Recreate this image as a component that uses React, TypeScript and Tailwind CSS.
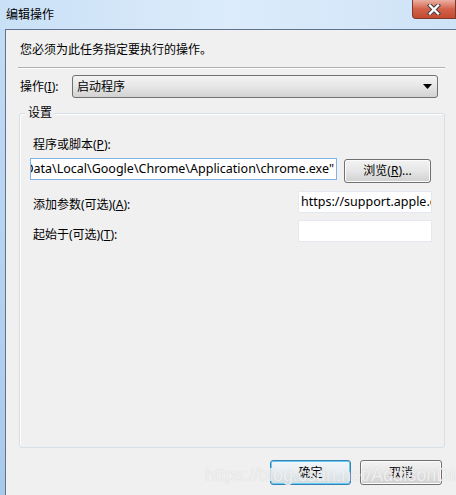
export default function App() {
  return (
    <div
      className="relative w-[456px] h-[495px] overflow-hidden bg-gradient-to-b from-[#d6e8f9] to-[#b3d0ef] text-[12px] text-black"
      style={{ fontFamily: '"Noto Sans", "Noto Sans CJK SC", sans-serif' }}
    >
      {/* TITLE BAR */}
      <div className="h-[29px] flex items-center pl-[6px] bg-gradient-to-r from-[#c9e0f6] via-[#dcecfb] to-[#cfe3f7]">
        <span className="text-[12px] leading-none">编辑操作</span>
      </div>

      {/* CLOSE */}
      <div className="absolute top-0 right-0 w-[44px] h-[19px] rounded-bl-[4px] border border-t-0 border-[#7a3b2e] bg-gradient-to-b from-[#eab0a2] via-[#d2614a] to-[#c44a30] flex items-center justify-center">
        <svg width="14" height="11" viewBox="0 0 14 11">
          <path d="M3 1.5 L11 9.5 M11 1.5 L3 9.5" stroke="#3b3b3b" strokeWidth="4.2" strokeLinecap="square" />
          <path d="M3 1.5 L11 9.5 M11 1.5 L3 9.5" stroke="#ffffff" strokeWidth="2.4" strokeLinecap="square" />
        </svg>
      </div>

      <div className="flex h-[466px]">
        {/* left frame */}
        <div className="w-[5px] bg-gradient-to-b from-[#c3dbf4] to-[#a9c9ec]" />

        {/* CLIENT */}
        <div className="flex-1 flex flex-col bg-[#f0f0f0] border-l border-t border-[#5f7390]">
          <p className="mt-[12px] pl-[14px] leading-[16px]">您必须为此任务指定要执行的操作。</p>

          <div className="mt-[9px] ml-[12px] mr-[11px] border-t border-b border-t-[#b0b0b0] border-b-white" />

          <div className="mt-[6px] flex items-center pl-[14px]">
            <span className="w-[52px] leading-[16px]">
              操作(<u>I</u>):
            </span>
            <div className="w-[366px] h-[23px] rounded-[3px] border border-[#707070] bg-gradient-to-b from-[#f3f3f3] via-[#e6e6e6] to-[#d2d2d2] flex items-center pl-[4px] pr-[5px]">
              <span className="flex-1">启动程序</span>
              <svg width="9" height="5" viewBox="0 0 9 5">
                <path d="M0 0 H9 L4.5 5 Z" fill="#000" />
              </svg>
            </div>
          </div>

          {/* GROUP */}
          <div className="relative mt-[15px] ml-[13px] mr-[11px] h-[335px] rounded-[3px] border border-[#d5dfe5] shadow-[inset_1px_1px_0_#ffffff]">
            <span className="absolute -top-[9px] left-[5px] px-[3px] bg-[#f0f0f0] leading-[16px]">设置</span>

            <p className="mt-[23px] pl-[13px] leading-[16px]">
              程序或脚本(<u>P</u>):
            </p>

            <div className="mt-[5px] flex items-start pl-[10px]">
              <div className="w-[307px] h-[22px] border border-[#7eb4ea] bg-white overflow-hidden flex items-center justify-end pr-[2px]">
                <span className="whitespace-nowrap text-[12.5px]">
                  "C:\Users\Admin\AppData\Local\Google\Chrome\Application\chrome.exe"
                </span>
              </div>
              <button className="ml-[7px] mt-[1px] w-[87px] h-[24px] rounded-[3px] border border-[#707070] bg-gradient-to-b from-[#f2f2f2] via-[#e6e6e6] to-[#d0d0d0] shadow-[inset_0_0_0_1px_#fcfcfc]">
                浏览(<u>R</u>)...
              </button>
            </div>

            <div className="mt-[8px] flex items-start pl-[13px]">
              <span className="mt-[6px] flex-1 leading-[16px]">
                添加参数(可选)(<u>A</u>):
              </span>
              <div className="mr-[12px] w-[134px] h-[22px] border border-[#e3e9ef] bg-white overflow-hidden flex items-center pl-[2px]">
                <span className="whitespace-nowrap text-[12.5px]">https://support.apple.com</span>
              </div>
            </div>

            <div className="mt-[7px] flex items-start pl-[13px]">
              <span className="mt-[7px] flex-1 leading-[16px]">
                起始于(可选)(<u>T</u>):
              </span>
              <div className="mr-[12px] w-[134px] h-[22px] border border-[#e3e9ef] bg-white" />
            </div>
          </div>

          {/* BUTTONS */}
          <div className="mt-[12px] flex justify-end gap-[9px] pr-[14px]">
            <button className="w-[81px] h-[25px] rounded-[3px] border border-[#3c7fb1] bg-gradient-to-b from-[#f2f6f9] via-[#e6ecf0] to-[#d4dde3] shadow-[inset_0_0_0_1px_#5fcdf5]">
              确定
            </button>
            <button className="w-[82px] h-[25px] rounded-[3px] border border-[#707070] bg-gradient-to-b from-[#f2f2f2] via-[#e6e6e6] to-[#d0d0d0] shadow-[inset_0_0_0_1px_#fcfcfc]">
              取消
            </button>
          </div>
        </div>
      </div>

      {/* watermark */}
      <span className="absolute left-[205px] top-[462px] text-[18px] text-white/70 whitespace-nowrap [text-shadow:0_0_1px_#c8c8c8]" style={{ fontFamily: '"Liberation Sans", sans-serif' }}>
        https://blog.csdn.net/AddisonDing
      </span>
    </div>
  );
}
